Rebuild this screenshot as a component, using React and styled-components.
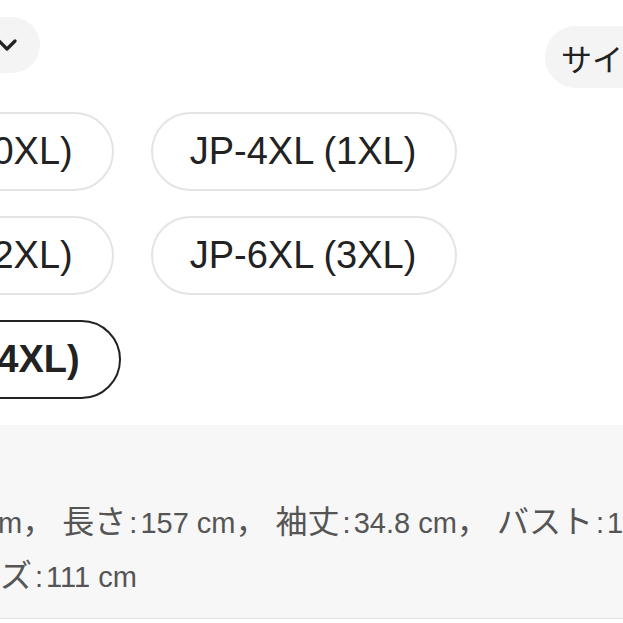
import React from 'react'
import styled, { createGlobalStyle } from 'styled-components'

const GlobalStyle = createGlobalStyle`
  html, body {
    margin: 0;
    padding: 0;
    background: #ffffff;
    overflow: hidden;
  }
  body {
    font-family: "Liberation Sans", "Noto Sans CJK JP", sans-serif;
    color: #222222;
  }
`

const Viewport = styled.div`
  width: 623px;
  height: 623px;
  overflow: hidden;
`

// the screenshot is a crop of a wider page, so the content starts left of the frame
const Content = styled.div`
  margin-left: -193px;
  width: 1200px;
`

const Header = styled.div`
  display: flex;
  align-items: flex-start;
  gap: 505px;
  padding: 17px 0 0 33px;
`

const SortButton = styled.div`
  display: flex;
  align-items: center;
  gap: 12px;
  height: 56px;
  padding: 0 22px 0 24px;
  border-radius: 28px;
  background: #f4f4f4;
  font-family: "Noto Sans CJK JP", sans-serif;
  font-size: 30px;
  color: #222;
  white-space: nowrap;
`

const GuideButton = styled.div`
  display: flex;
  align-items: center;
  height: 62px;
  margin-top: 9px;
  padding: 0 16px;
  border-radius: 31px;
  background: #f4f4f4;
  font-family: "Noto Sans CJK JP", sans-serif;
  font-size: 31px;
  color: #222;
  white-space: nowrap;
`

const SizeList = styled.div`
  display: flex;
  flex-wrap: wrap;
  gap: 25px 37px;
  max-width: 670px;
  margin-top: 24px;
`

const SizePill = styled.div`
  box-sizing: border-box;
  display: inline-flex;
  align-items: center;
  height: 79px;
  padding: 0 39px 0 37px;
  border: 2px solid ${p => (p.$active ? '#222222' : '#e4e4e4')};
  border-radius: 40px;
  background: #fff;
  font-size: 38px;
  font-weight: ${p => (p.$active ? 700 : 400)};
  color: #222;
  white-space: nowrap;
`

const SpecPanel = styled.div`
  margin-top: 26px;
  padding: 71px 0 14px 34px;
  background: #f7f7f7;
  border-bottom: 1px solid #e2e2e2;
  font-size: 29px;
  line-height: 54px;
  color: #555555;
`

const SpecLine = styled.div`
  white-space: nowrap;
`

const Jp = styled.span`
  font-family: "Noto Sans CJK JP", sans-serif;
  font-size: 32px;
  line-height: 1;
`

const Colon = styled.span`
  padding: 0 3px;
`

const Chevron = () => (
  <svg width="22" height="14" viewBox="0 0 22 14">
    <polyline
      points="3,3 11,11 19,3"
      fill="none"
      stroke="#222"
      strokeWidth="3.2"
      strokeLinecap="round"
      strokeLinejoin="round"
    />
  </svg>
)

const sizes = [
  { label: 'JP-3XL (0XL)' },
  { label: 'JP-4XL (1XL)' },
  { label: 'JP-5XL (2XL)' },
  { label: 'JP-6XL (3XL)' },
  { label: 'JP-7XL (4XL)', active: true },
]

const specLines = [
  [
    { key: '裾幅', value: '98.5 cm' },
    { key: '長さ', value: '157 cm' },
    { key: '袖丈', value: '34.8 cm' },
    { key: 'バスト', value: '122 cm' },
    { key: 'ウエスト', value: '104 cm' },
  ],
  [{ key: 'ヒップサイズ', value: '111 cm' }],
]

const App = () => {
  return (
    <>
      <GlobalStyle />
      <Viewport>
        <Content>
          <Header>
            <SortButton>
              並び替え
              <Chevron />
            </SortButton>
            <GuideButton>サイズガイド</GuideButton>
          </Header>

          <SizeList>
            {sizes.map(s => (
              <SizePill key={s.label} $active={s.active}>
                {s.label}
              </SizePill>
            ))}
          </SizeList>

          <SpecPanel>
            {specLines.map((line, i) => (
              <SpecLine key={i}>
                {line.map((item, j) => (
                  <React.Fragment key={item.key}>
                    <Jp>{item.key}</Jp>
                    <Colon>:</Colon>
                    {item.value}
                    {(j < line.length - 1 || i < specLines.length - 1) && (
                      <>
                        <Jp>，</Jp>{' '}
                      </>
                    )}
                  </React.Fragment>
                ))}
              </SpecLine>
            ))}
          </SpecPanel>
        </Content>
      </Viewport>
    </>
  )
}

export default App
